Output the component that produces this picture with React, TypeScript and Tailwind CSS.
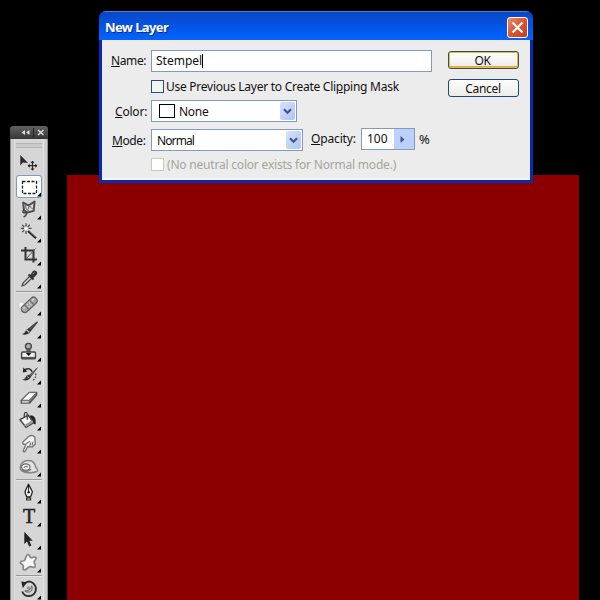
import { useState } from 'react';
import type { ReactNode } from 'react';

interface Tool {
  name: string;
  icon: ReactNode;
  flyout?: boolean;
}

const ink = '#2b2b2b';

const toolGroups: Tool[][] = [
  [
    {
      name: 'Move',
      flyout: false,
      icon: (
        <>
          <path d="M3.3 3v10.4l2.7-2.8L11 11z" fill={ink} />
          <path d="M15.5 9v9M11 13.7h9" stroke={ink} strokeWidth="1.2" />
          <path d="M13.5 11l2-2.3 2 2.3zM13.5 16.4l2 2.3 2-2.3zM12.8 11.7l-2.3 2 2.3 2zM18.2 11.7l2.3 2-2.3 2z" fill={ink} />
        </>
      ),
    },
    {
      name: 'Marquee',
      icon: <rect x="5.5" y="6.5" width="14" height="12" fill="none" stroke="#222" strokeWidth="1.3" strokeDasharray="3 1.5" />,
    },
    {
      name: 'Lasso',
      icon: (
        <>
          <path d="M6.2 4.5l5.4 3 6-4-1 9.4-6.2 1.6-3.5-2.4z" fill="#ddd" stroke="#4c4c4c" strokeWidth="2" strokeLinejoin="round" />
          <path d="M8.5 6l.5 5 3 2M12.5 7.5l-1.5 4M12.5 8l3 3" fill="none" stroke="#666" />
          <path d="M7.5 12c-2.5 1-2 3.2.3 2.8 2.5-.5 2.6 1.8-1.2 4.4" fill="none" stroke="#444" strokeWidth="1.5" />
        </>
      ),
    },
    {
      name: 'Magic Wand',
      icon: (
        <>
          <path d="M9 2.2V5.4M9 9.9v3M3.8 7.4H7M11.5 7.4h3M5.2 3.8l2.2 2.2M12.8 3.8l-2.3 2.2M5.2 11.1l2.2-2.2" stroke="#444" strokeWidth="1.2" />
          <circle cx="9" cy="7.4" r="1.7" fill="#fff" />
          <path d="M11 10l8 7.3" stroke="#222" strokeWidth="2.2" />
          <path d="M12.5 10.5l6 5.5" stroke="#999" strokeWidth=".6" />
        </>
      ),
    },
    {
      name: 'Crop',
      icon: (
        <>
          <path d="M4 6.5h12.5v12M8.5 3v12.5H20" fill="none" stroke="#333" strokeWidth="2" />
          <path d="M9 15l9.5-10.5" stroke="#555" />
        </>
      ),
    },
    {
      name: 'Eyedropper',
      icon: (
        <>
          <path d="M5 18.8l1-2.6L13 9l2 2-7 6.8z" fill="#ddd" stroke="#444" strokeWidth="1.2" />
          <path d="M11.5 7.5l5 5M13.5 9.5L16 5.5c1.5-2.3 4.3-.5 2.7 2L15 11z" fill="#333" stroke="#333" strokeWidth="1.9" />
          <path d="M15.5 7.2l1.7-1.7" stroke="#aaa" />
        </>
      ),
    },
  ],
  [
    {
      name: 'Healing Brush',
      icon: (
        <>
          <path d="M1.8 9.5c2-2 4-1.5 5-.5l3 8.5H2.7z" fill="#fafafa" stroke="#bbb" strokeWidth=".6" />
          <g transform="rotate(-43 12.2 10.8)">
            <rect x="2.7" y="7.3" width="19" height="7" rx="3.5" fill="#a6a6a6" stroke="#606060" strokeWidth="1.2" />
            <path d="M8.7 7.8v6M15.7 7.8v6" stroke="#666" />
            <path d="M10.5 9.6h1M13 9.6h1M10.5 12h1M13 12h1M5.2 9.6h2M17.2 9.6h2" stroke="#eee" />
          </g>
        </>
      ),
    },
    {
      name: 'Brush',
      icon: (
        <>
          <path d="M20.5 4.8l-8.7 7 1.8 1.9z" fill="#555" stroke="#444" strokeWidth="1.2" />
          <path d="M12 11.8c-2.2 0-3 1.2-3.7 2.8-.5 1.4-2 2.3-3.7 2.5 3.7 1.3 7.9.4 9.2-3z" fill="#2e2e2e" />
          <path d="M9.4 12.9l2.9 2.4" stroke="#eee" strokeWidth="1.1" />
        </>
      ),
    },
    {
      name: 'Clone Stamp',
      icon: (
        <>
          <circle cx="11.4" cy="6.3" r="3" fill="#aaa" stroke="#444" strokeWidth="1.3" />
          <path d="M10 9h3v3h-3z" fill="#777" stroke="#444" />
          <rect x="4.6" y="12" width="13.9" height="6.8" rx="1" fill="#eee" stroke="#444" strokeWidth="1.4" />
          <path d="M5 17.7h13" stroke="#555" strokeWidth="1.6" />
          <path d="M8.8 13h5.6l-2.8 3z" fill="#111" />
        </>
      ),
    },
    {
      name: 'History Brush',
      icon: (
        <>
          <path d="M20.3 4.8l-8 7.5 1.4 1.4z" fill="#666" stroke="#555" />
          <path d="M12.4 11.8c-2.2 0-3 1-3.9 2.8-.5 1.2-1.8 2-3.6 2.2 3.6 1.5 7.9.4 9.1-3z" fill="#333" />
          <path d="M9.8 13.2l2.2 1.8" stroke="#ccc" strokeWidth=".8" />
          <path d="M8 6.7c3.2-1.8 6.3-.8 7 2.2" fill="none" stroke="#333" strokeWidth="1.6" />
          <path d="M6.3 4.5l-.4 5 4.4-1.1z" fill="#222" />
          <path d="M18.5 10.5c.8 3-.3 5.5-3.3 7.3" fill="none" stroke="#444" strokeWidth="1.3" strokeDasharray="1.6 1.4" />
        </>
      ),
    },
    {
      name: 'Eraser',
      icon: (
        <>
          <path d="M4.2 14.5l8-8h7.5v2.5l-7 8H4.2z" fill="#777" stroke="#555" strokeWidth="1.3" strokeLinejoin="round" />
          <path d="M5 14.1l7.4-7.4h6.8L12 14.1z" fill="#fff" stroke="#666" strokeWidth=".7" />
          <path d="M5 14.9h6.8v1.8H5z" fill="#ccc" />
        </>
      ),
    },
    {
      name: 'Paint Bucket',
      icon: (
        <>
          <path d="M3 10.7l8.3-4.5 5.4 7.5-7.7 4.7z" fill="#f4f4f4" stroke="#444" strokeWidth="1.5" strokeLinejoin="round" />
          <path d="M7 16.2l8.5-5.2.8 2.5-7 4.5z" fill="#999" />
          <path d="M10.3 10.7V5.4c0-2.6-3-2.6-3 0v3" fill="none" stroke="#444" strokeWidth="1.3" />
          <path d="M12.5 6.7c4.5-.7 6.7 1.7 6.2 8.5-1.7.3-2.4-.7-2.5-3z" fill="#222" />
        </>
      ),
    },
    {
      name: 'Smudge',
      icon: (
        <>
          <path d="M6.3 18.5L9 12.2l-2.4-.2c-1.2-.6-1-2 .1-2.8l4.7-4.4c2.4-1.9 4.8-1.4 6.4.4l.5 6.8-3.1 3-2.3-.2-2.2-.3-2.6 4.8c-.8 1-2.1.6-1.8-.8z" fill="#f5f5f5" stroke="#777" strokeWidth="1.4" />
          <path d="M9.5 11.5l3.4-2.3M12.5 14.3l1.4-3.9M15 13.5l.9-3.8" stroke="#777" strokeWidth="1.2" />
        </>
      ),
    },
    {
      name: 'Sponge',
      icon: (
        <>
          <path d="M3.2 12.8c0-4.5 3.6-7.5 8.3-7.3 4.5.2 6.8 3 7.3 7 1.8 1.5 2.5 3.2 1 4-2 1-4.6 1.3-7.8 1.2-5-.2-8.8-1.2-8.8-4.9z" fill="#e2e2e2" stroke="#858585" strokeWidth="1.5" />
          <path d="M4.5 14.5c3.5 2.7 7 2 9.5-.3" fill="none" stroke="#777" strokeWidth="1.4" />
          <ellipse cx="8.8" cy="12" rx="4.2" ry="3.2" fill="#f7f7f7" stroke="#666" strokeWidth="1.2" />
          <path d="M7 12.8c.3-1.5 2.5-1.8 3.8-.5" fill="none" stroke="#777" strokeWidth="1.2" />
        </>
      ),
    },
  ],
  [
    {
      name: 'Pen',
      icon: (
        <>
          <path d="M11.5 2.3L8 9.5c0 2.3 1.3 3.8 1.8 5.5h3.6c.5-1.7 1.9-3.2 1.9-5.5z" fill="#f5f5f5" stroke="#222" strokeWidth="1.3" strokeLinejoin="round" />
          <path d="M11.6 3v7" stroke="#222" />
          <circle cx="11.6" cy="10.3" r="1.2" fill="#222" />
          <path d="M9 15.5h5.2v3H9z" fill="#333" />
          <path d="M10.2 17h2.8" stroke="#ccc" />
        </>
      ),
    },
    {
      name: 'Type',
      icon: (
        <text x="12" y="17.5" textAnchor="middle" fontSize="20" fontFamily="Liberation Serif, serif" fill="#222" stroke="#222" strokeWidth=".5">
          T
        </text>
      ),
    },
    {
      name: 'Path Selection',
      icon: <path d="M7.3 3.7V16l2.7-2.6 2.1 5 2.3-1-2.1-4.6h3.4z" fill="#222" />,
    },
    {
      name: 'Custom Shape',
      icon: (
        <path
          d="M9.5 4.8c1.1-2 2.4-1.4 3.1.1l.8 1.7c2 .5 4.2-1.3 5.5-.2 1.4 1.2-1.8 3-1.8 4.5s2.1 3.2 1 4.8c-1.2 1.7-3-.3-4.9-.1-2.2.2-3.8 3.8-6.2 3.3-2-.4-.3-2.8-.6-4.2-.3-1.3-3.4-1.7-3-3.6.4-1.7 3-.6 4-1.6 1-.9 1.3-3.3 2.1-4.7z"
          fill="#f7f7f7"
          stroke="#888"
          strokeWidth="1.7"
        />
      ),
    },
  ],
  [
    {
      name: 'Rotate',
      icon: (
        <>
          <path d="M7.3 6C13-.2 20.5 7 18.5 13.3 16.5 19.3 7.7 20 5.2 13.5" fill="none" stroke="#333" strokeWidth="2" />
          <path d="M4.3 3.5l5.5.7-4 6z" fill="#222" />
          <path d="M14.7 7.7c2.2 5-2.5 8.5-7 5.2 3 .2 6-1 7-5.2z" fill="#bbb" stroke="#666" />
          <circle cx="11.3" cy="10" r="1.8" fill="#999" />
        </>
      ),
    },
  ],
];

function Toolbox() {
  const [active, setActive] = useState('Marquee');

  return (
    <aside className="absolute left-[10px] top-[126px] w-[38px] h-[474px] overflow-hidden">
      <div className="h-[13px] rounded-t-[3px] bg-linear-to-b from-[#626262] to-[#353535] flex items-center justify-end pr-[3px] gap-[3px]">
        <svg width="9" height="7" viewBox="0 0 9 7" fill="#ddd">
          <path d="M4 1v5L.5 3.5zM8.5 1v5L5 3.5z" />
        </svg>
        <div className="w-px h-[9px] bg-[#222]" />
        <svg width="8" height="7" viewBox="0 0 8 7" fill="none" stroke="#ddd" strokeWidth="1.5">
          <path d="M1 1l5.5 5M6.5 1L1 6" />
        </svg>
      </div>
      <div className="h-[461px] px-1 bg-[#cecece] border-x border-[#8f8f8f]">
        <div className="h-full px-px bg-[#d6d6d6] shadow-[-1px_0_#dedede,1px_0_#e4e4e4]">
          <div className="h-[13px] pt-[4px]">
            <div className="h-[5px] border-y border-[#b4b4b4] bg-[#cbcbcb]" />
          </div>
          {toolGroups.map((group, i) => (
            <div key={i}>
              {i > 0 && (
                <div className="h-1 pt-px">
                  <div className="h-[2px] bg-[#999] border-b border-[#e5e5e5]" />
                </div>
              )}
              {group.map((tool) => (
                <button
                  key={tool.name}
                  title={tool.name}
                  onClick={() => setActive(tool.name)}
                  className={
                    tool.name === active
                      ? 'block w-[26px] h-[23px] rounded-[3px] bg-white shadow-[inset_0_0_0_1px_#7f9cb2]'
                      : 'block w-[26px] h-[23px]'
                  }
                >
                  <svg width="26" height="23" viewBox="-1 0 26 23">
                    {tool.icon}
                    {tool.flyout !== false && <path d="M24 17.5v4h-4z" fill="#000" />}
                  </svg>
                </button>
              ))}
            </div>
          ))}
        </div>
      </div>
    </aside>
  );
}

function Chevron() {
  return (
    <span className="w-[15px] h-[18px] rounded-[2px] bg-linear-to-br from-[#d5e1fd] to-[#aec5f6] flex items-center justify-center">
      <svg width="9" height="7" viewBox="0 0 9 7" fill="none" stroke="#40587f" strokeWidth="2.2">
        <path d="M1 1.2l3.5 3.5L8 1.2" />
      </svg>
    </span>
  );
}

function NewLayerDialog() {
  const [clipping, setClipping] = useState(false);

  return (
    <section className="absolute left-[99px] top-[11px] w-[434px] h-[172px] rounded-t-[7px] overflow-hidden bg-[#0a2bb0] flex flex-col">
      <header className="h-[29px] shrink-0 pl-[6px] pr-[5px] pt-[2px] flex items-center justify-between bg-linear-to-b from-[#0a46c4] via-[#0355e6] to-[#0364fc] border-t border-[#3c84e8]">
        <h1 className="text-[13px] leading-4 font-bold tracking-[-0.6px] text-white [text-shadow:1px_1px_#0a2b8c]">New Layer</h1>
        <button className="w-[21px] h-[21px] rounded-[3px] border border-white bg-linear-to-br from-[#ec8b6c] via-[#dc5330] to-[#c53c1c] flex items-center justify-center">
          <svg width="13" height="13" viewBox="0 0 13 13" stroke="#fff" strokeWidth="2.2">
            <path d="M1.5 1.5l10 10M11.5 1.5l-10 10" />
          </svg>
        </button>
      </header>

      <div className="mx-[3px] mb-[3px] grow bg-[#ececec] border-b-2 border-[#f6f6f6] flex text-[12px] leading-[14px] text-[#111] whitespace-nowrap">
        <div className="w-[331px] pt-[10px]">
          <div className="flex items-center h-[22px]">
            <label className="w-[49px] pl-[9px] tracking-[-0.4px]"><u>N</u>ame:</label>
            <div className="w-[281px] h-[22px] pl-1 border border-[#7f9db9] bg-white flex items-center">
              <span>Stempel</span>
              <span className="w-px h-[14px] bg-black" />
            </div>
          </div>

          <button className="mt-[7px] ml-[49px] h-[14px] flex items-center gap-[2px]" onClick={() => setClipping(!clipping)}>
            <span className="w-[13px] h-[13px] border border-[#1c5180] bg-[#f4f4f2] flex items-center justify-center">
              {clipping && <span className="w-[7px] h-[7px] bg-[#21a121]" />}
            </span>
            <span className="pt-px tracking-[-0.26px]">Use Previous Layer to Create Cli<u>p</u>ping Mask</span>
          </button>

          <div className="mt-[7px] h-[22px] flex items-center">
            <label className="w-[49px] pl-[13px] pt-px tracking-[-0.2px]"><u>C</u>olor:</label>
            <div className="w-[146px] h-[22px] pl-[7px] pr-px border border-[#7f9db9] bg-white flex items-center">
              <span className="w-4 h-[14px] border border-black bg-white" />
              <span className="grow pl-1 pt-px tracking-[-0.3px]">None</span>
              <Chevron />
            </div>
          </div>

          <div className="mt-[7px] h-[22px] flex items-center">
            <label className="w-[49px] pl-[10px] pt-px tracking-[-0.4px]"><u>M</u>ode:</label>
            <div className="w-[152px] h-[22px] pl-[5px] pr-px border border-[#7f9db9] bg-white flex items-center">
              <span className="grow pt-px tracking-[-0.9px]">Normal</span>
              <Chevron />
            </div>
            <label className="w-[58px] pl-2 -mt-[2px] tracking-[-0.15px]"><u>O</u>pacity:</label>
            <div className="w-[54px] h-[22px] -mt-[2px] shrink-0 border border-[#7f9db9] bg-white flex">
              <span className="w-[32px] pl-[5px] pt-[3px]">100</span>
              <span className="grow bg-[#bcd0fb] flex items-center pl-[6px]">
                <svg width="5" height="7" viewBox="0 0 5 7" fill="#40587f"><path d="M.5 0v7l4-3.5z" /></svg>
              </span>
            </div>
            <span className="pl-1 -mt-[2px] text-[13px]">%</span>
          </div>

          <div className="mt-[6px] ml-[49px] h-[14px] flex items-center gap-[3px] text-[#a5a59c]">
            <span className="w-[13px] h-[13px] border border-[#cac8bb] bg-white" />
            <span className="pt-px tracking-[-0.2px]">(No neutral color exists for Normal mode.)</span>
          </div>
        </div>

        <div className="pt-[11px] pl-[15px] flex flex-col gap-[10px]">
          <button className="w-[71px] h-[18px] pt-px pr-[2px] rounded-[3px] border border-[#3d4f45] bg-linear-to-b from-white to-[#ecebe5] shadow-[inset_0_0_0_1px_#e3b85c,inset_0_-2px_#e0a93c] flex items-center justify-center tracking-[-0.3px]">OK</button>
          <button className="w-[71px] h-[18px] pt-px pr-px rounded-[3px] border border-[#1c4a78] bg-linear-to-b from-white to-[#ecebe5] flex items-center justify-center tracking-[-0.3px]">Cancel</button>
        </div>
      </div>
    </section>
  );
}

export default function App() {
  return (
    <main className="relative w-[600px] h-[600px] overflow-hidden bg-black font-['Noto_Sans',sans-serif]">
      <div className="absolute left-[67px] top-[175px] w-[512px] h-[425px] bg-[#8c0000]" />
      <Toolbox />
      <NewLayerDialog />
    </main>
  );
}
